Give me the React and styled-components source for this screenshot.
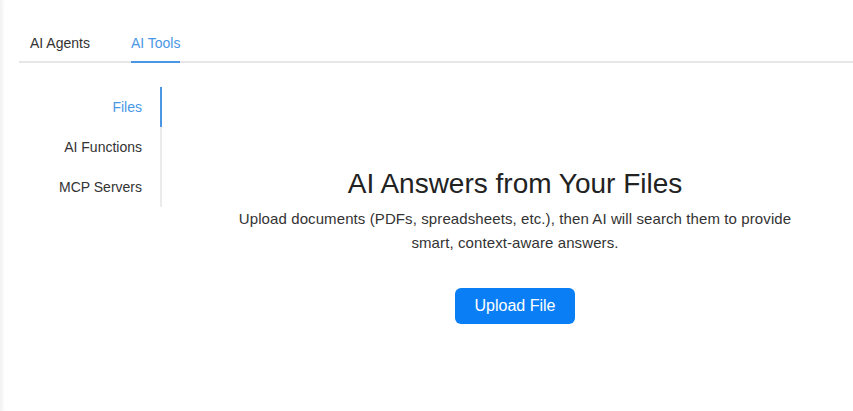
import React, { useState } from "react";
import styled, { createGlobalStyle } from "styled-components";

const Global = createGlobalStyle`
  html, body { margin: 0; padding: 0; background: #ffffff; }
  body { font-family: "Liberation Sans", Arial, sans-serif; color: #333; }
  * { box-sizing: border-box; }
`;

const Frame = styled.div`
  min-height: 411px;
  padding: 20px 0 0 19px;
  box-shadow: inset 4px 0 3px -1px #f3f3f3;
  display: flex;
  flex-direction: column;
`;

const TabBar = styled.div`
  display: flex;
  gap: 41px;
  padding-left: 11px;
  box-shadow: inset 0 -2px 0 #e6e6e6;
`;

const Tab = styled.div`
  font-size: 14px;
  line-height: 22px;
  padding: 12px 0 7px;
  border-bottom: 2px solid ${(p) => (p.$active ? "#4b96e3" : "transparent")};
  color: ${(p) => (p.$active ? "#4a97e6" : "#333")};
  cursor: pointer;
`;

const Body = styled.div`
  display: flex;
  align-items: flex-start;
`;

const SideMenu = styled.div`
  width: 143px;
  margin-top: 24px;
  display: flex;
  flex-direction: column;
  box-shadow: inset -2px 0 0 #ebebeb;
`;

const MenuItem = styled.div`
  height: 40px;
  line-height: 40px;
  font-size: 14px;
  text-align: right;
  padding-right: 18px;
  border-right: 2px solid ${(p) => (p.$active ? "#4b96e3" : "transparent")};
  color: ${(p) => (p.$active ? "#4a97e6" : "#333")};
  cursor: pointer;
`;

const Content = styled.div`
  flex: 1;
  padding: 104px 0 0 15px;
  display: flex;
  flex-direction: column;
  align-items: center;
  text-align: center;
`;

const Title = styled.h2`
  margin: 0;
  font-size: 28px;
  line-height: 34px;
  font-weight: 400;
  color: #222;
`;

const Desc = styled.p`
  margin: 6px 0 0;
  max-width: 580px;
  font-size: 15px;
  line-height: 24px;
  letter-spacing: 0.1px;
  color: #333;
`;

const UploadButton = styled.button`
  margin-top: 33px;
  width: 120px;
  height: 36px;
  border: none;
  border-radius: 6px;
  background: #0a7ff5;
  color: #fff;
  font-family: inherit;
  font-size: 16px;
  cursor: pointer;
`;

export default function App() {
  const [tab, setTab] = useState("tools");
  const [item, setItem] = useState("files");
  const items = [
    ["files", "Files"],
    ["functions", "AI Functions"],
    ["mcp", "MCP Servers"],
  ];
  return (
    <>
      <Global />
      <Frame>
        <TabBar>
          <Tab $active={tab === "agents"} onClick={() => setTab("agents")}>AI Agents</Tab>
          <Tab $active={tab === "tools"} onClick={() => setTab("tools")}>AI Tools</Tab>
        </TabBar>
        <Body>
          <SideMenu>
            {items.map(([k, label]) => (
              <MenuItem key={k} $active={item === k} onClick={() => setItem(k)}>
                {label}
              </MenuItem>
            ))}
          </SideMenu>
          <Content>
            <Title>AI Answers from Your Files</Title>
            <Desc>
              Upload documents (PDFs, spreadsheets, etc.), then AI will search them to provide smart,
              context-aware answers.
            </Desc>
            <UploadButton>Upload File</UploadButton>
          </Content>
        </Body>
      </Frame>
    </>
  );
}
